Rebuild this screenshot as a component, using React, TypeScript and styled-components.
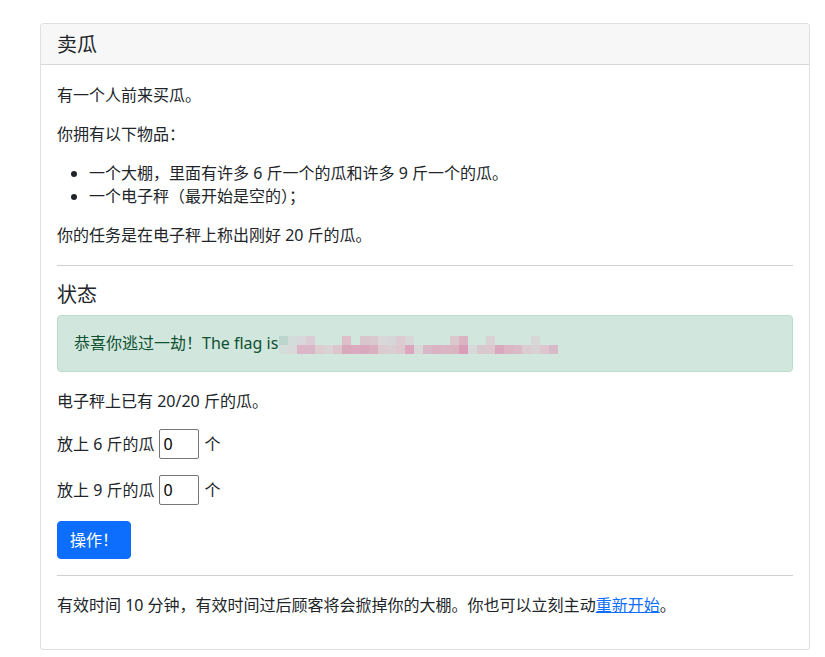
import React from "react";
import styled, { createGlobalStyle } from "styled-components";

const Global = createGlobalStyle`
  * { box-sizing: border-box; }
  body {
    margin: 0;
    background: #fff;
    color: #212529;
    font-family: "Noto Sans", "Noto Sans CJK SC", sans-serif;
    font-size: 16px;
    line-height: 23px;
  }
`;

const Page = styled.div`
  padding: 23px 15px 10px 40px;
`;

const Card = styled.div`
  width: 770px;
  border: 1px solid rgba(0, 0, 0, 0.125);
  border-radius: 4px;
  background: #fff;
`;

const CardHeader = styled.div`
  height: 41px;
  padding: 0 16px;
  display: flex;
  align-items: center;
  background: #f7f7f7;
  border-bottom: 1px solid rgba(0, 0, 0, 0.125);
  border-radius: 4px 4px 0 0;
  font-size: 20px;
  color: #212529;
`;

const CardBody = styled.div`
  padding: 19px 16px 16px 16px;
`;

const P = styled.p`
  margin: 0 0 16px 0;
  line-height: 23px;
`;

const List = styled.ul`
  margin: 0 0 16px 0;
  padding-left: 32px;
  line-height: 23px;
`;

const Rule = styled.hr<{ $above: number; $below: number }>`
  margin: ${(p) => p.$above}px 0 ${(p) => p.$below}px 0;
  border: 0;
  border-top: 1px solid #cfcfcf;
`;

const Heading = styled.h5`
  margin: 0 0 8px 0;
  font-size: 20px;
  font-weight: 400;
  line-height: 25px;
`;

const Alert = styled.div`
  height: 57px;
  padding: 0 16px;
  display: flex;
  align-items: center;
  margin-bottom: 18px;
  background: #d1e7dd;
  border: 1px solid #badbcc;
  border-radius: 4px;
  color: #0f5132;
`;

const Mosaic = styled.span`
  display: inline-grid;
  grid-template-columns: repeat(31, 9px);
  grid-template-rows: 9px 9px;
  margin-left: 1px;
  margin-top: 2px;
`;

const Cell = styled.span<{ $c: string }>`
  background: ${(p) => p.$c};
`;

const FieldRow = styled.div`
  display: flex;
  align-items: center;
  gap: 5px;
  margin-bottom: 16px;
  line-height: 23px;
`;

const NumInput = styled.input`
  width: 40px;
  height: 30px;
  padding: 0 3px;
  border: 1px solid #767676;
  border-radius: 2px;
  font-family: "Noto Sans", sans-serif;
  font-size: 16px;
  color: #000;
`;

const Button = styled.button`
  display: block;
  height: 38px;
  padding: 0 12px;
  background: #0d6efd;
  border: 1px solid #0d6efd;
  border-radius: 4px;
  color: #fff;
  font-family: "Noto Sans", "Noto Sans CJK SC", sans-serif;
  font-size: 16px;
  line-height: 23px;
`;

const Link = styled.a`
  color: #0d6efd;
  text-decoration: underline;
`;

const top = [
  "#bcd6cd", "#d3dcd8", "#d8d8dc", "#dcccd3", "", "", "", "#ddbfc9", "", "#d9c6cd",
  "#d9c9cf", "#d9d7d8", "#d6d6d8", "#dccbd0", "#d7d7d8", "", "", "", "", "#dac8cd",
  "#dab4c2", "", "", "#d9d2d4", "", "", "", "", "#d8d7d8", "", "",
];
const bottom = [
  "#d4ddd9", "#d8dada", "#dcb6c6", "#d9b7c6", "#dccdd1", "#dad3d5", "#dcc5cd", "#d7a9ba",
  "#dbaabf", "#d8a9bd", "#dbaec0", "#dacbd0", "#d9cfd2", "#dcc9cf", "#dba6be", "#d8d8d8",
  "#d7b8c7", "#dab3c3", "#dab6c4", "#d9b5c2", "#d99db7", "#d6dbd9", "#d8c9ce", "#dcc9d0",
  "#d8a8bd", "#dcb5c5", "#dbbac8", "#dccbd0", "#d9d2d4", "#dcc6cf", "#d8b9c7",
];

export default function App() {
  return (
    <Page>
      <Global />
      <Card>
        <CardHeader>卖瓜</CardHeader>
        <CardBody>
          <P>有一个人前来买瓜。</P>
          <P>你拥有以下物品：</P>
          <List>
            <li>一个大棚，里面有许多 6 斤一个的瓜和许多 9 斤一个的瓜。</li>
            <li>一个电子秤（最开始是空的）；</li>
          </List>
          <P>你的任务是在电子秤上称出刚好 20 斤的瓜。</P>
          <Rule $above={18} $below={16} />
          <Heading>状态</Heading>
          <Alert>
            恭喜你逃过一劫！The flag is
            <Mosaic aria-hidden>
              {top.map((c, i) => (
                <Cell key={"t" + i} $c={c || "transparent"} />
              ))}
              {bottom.map((c, i) => (
                <Cell key={"b" + i} $c={c || "transparent"} />
              ))}
            </Mosaic>
          </Alert>
          <P>电子秤上已有 20/20 斤的瓜。</P>
          <FieldRow>
            放上 6 斤的瓜 <NumInput type="number" defaultValue={0} /> 个
          </FieldRow>
          <FieldRow>
            放上 9 斤的瓜 <NumInput type="number" defaultValue={0} /> 个
          </FieldRow>
          <Button type="button">操作！</Button>
          <Rule $above={16} $below={18} />
          <P>
            有效时间 10 分钟，有效时间过后顾客将会掀掉你的大棚。你也可以立刻主动
            <Link href="#">重新开始</Link>。
          </P>
        </CardBody>
      </Card>
    </Page>
  );
}
